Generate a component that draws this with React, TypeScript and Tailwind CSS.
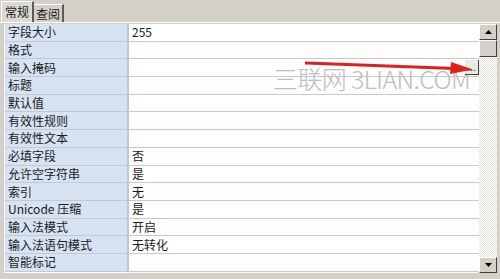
import React from 'react';

const ROWS: [string, string][] = [
  ['字段大小', '255'],
  ['格式', ''],
  ['输入掩码', ''],
  ['标题', ''],
  ['默认值', ''],
  ['有效性规则', ''],
  ['有效性文本', ''],
  ['必填字段', '否'],
  ['允许空字符串', '是'],
  ['索引', '无'],
  ['Unicode 压缩', '是'],
  ['输入法模式', '开启'],
  ['输入法语句模式', '无转化'],
  ['智能标记', ''],
];

const FONT = { fontFamily: '"Noto Sans CJK SC", "Liberation Sans", sans-serif' };

export default function App() {
  return (
    <div className="w-[500px] h-[279px] bg-[#d4d0c8] flex flex-col overflow-hidden text-[12px] text-[#1a1a1a]" style={FONT}>
      {/* Tabs */}
      <div className="h-[22px] flex items-end pl-[1px] shrink-0">
        <div className="h-[21px] px-[3px] bg-[#dcd9d2] border-t border-l border-white border-r-2 border-r-[#5a5a5a] flex items-center leading-none">常规</div>
        <div className="h-[18px] px-[2px] bg-[#d4d0c8] border-t border-r-2 border-t-white border-r-[#5a5a5a] flex items-center leading-none">查阅</div>
      </div>

      {/* Property grid */}
      <div className="flex-1 flex border-t border-white pl-[4px] pr-[3px] pt-[1px] pb-[6px]">
        <div className="flex-1 flex flex-col bg-white border-l border-[#f4f4f4] relative">
          {ROWS.map(([label, value], i) => (
            <div key={label} className="flex h-[17.7px] border-b border-[#c8c8c8]">
              <div className="w-[124px] bg-[#d6e3f2] pl-[3px] flex items-center leading-none border-r-2 border-[#b9c8da]">{label}</div>
              <div className={`flex-1 pl-[3px] flex items-center leading-none ${i % 2 ? 'bg-[#fffdfb]' : 'bg-white'}`}>{value}</div>
            </div>
          ))}

          {/* watermark */}
          <div className="absolute left-[268px] top-[42px] text-[25px] text-[#bdbdbd] leading-none tracking-tight" style={{ fontFamily: '"Noto Sans CJK SC", sans-serif', fontWeight: 300 }}>
            三联网 3LIAN.COM
          </div>

          {/* builder button */}
          <div className="absolute right-0 top-[36px] w-[14px] h-[15px] bg-[#ece9e2] border-r border-b border-[#404040] flex items-end justify-center leading-none text-[10px] pb-[2px]">...</div>

          {/* red arrow */}
          <svg className="absolute left-[300px] top-[36px]" width="170" height="16" viewBox="0 0 170 16">
            <path d="M1 3 L150 8.5" stroke="#e0201c" strokeWidth="3" strokeLinecap="round" />
            <path d="M146 2 L168 9.5 L145 14 Z" fill="#e0201c" />
          </svg>
        </div>

        {/* Scrollbar */}
        <div className="w-[18px] flex flex-col bg-[repeating-conic-gradient(#e6e3dc_0%_25%,#ffffff_0%_50%)] bg-[length:2px_2px]">
          <div className="h-[16px] bg-[#d4d0c8] border border-t-white border-l-white border-r-[#404040] border-b-[#404040] flex items-center justify-center">
            <svg width="7" height="4" viewBox="0 0 7 4"><path d="M3.5 0 L7 4 L0 4 Z" fill="#000" /></svg>
          </div>
          <div className="h-[17px] bg-[#d4d0c8] border border-t-white border-l-white border-r-[#404040] border-b-[#404040]" />
          <div className="flex-1" />
          <div className="h-[16px] bg-[#d4d0c8] border border-t-white border-l-white border-r-[#404040] border-b-[#404040] flex items-center justify-center">
            <svg width="7" height="4" viewBox="0 0 7 4"><path d="M0 0 L7 0 L3.5 4 Z" fill="#000" /></svg>
          </div>
        </div>
      </div>
    </div>
  );
}
